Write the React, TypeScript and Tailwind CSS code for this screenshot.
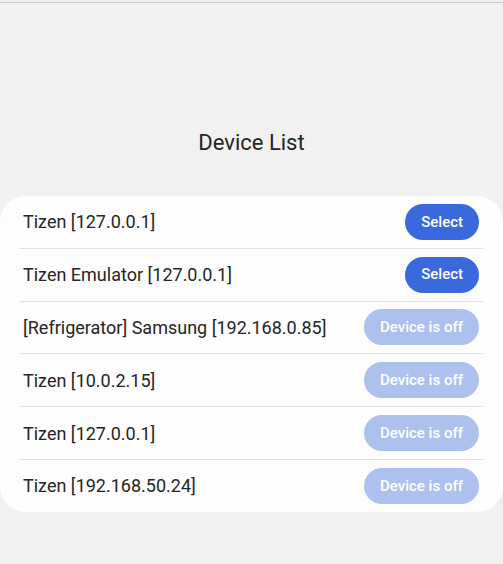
const devices = [
  { name: "Tizen [127.0.0.1]", on: true },
  { name: "Tizen Emulator [127.0.0.1]", on: true },
  { name: "[Refrigerator] Samsung [192.168.0.85]", on: false },
  { name: "Tizen [10.0.2.15]", on: false },
  { name: "Tizen [127.0.0.1]", on: false },
  { name: "Tizen [192.168.50.24]", on: false },
];

export default function App() {
  return (
    <div className="h-[564px] w-full overflow-hidden bg-[#f1f1f1] pt-[2px] font-['Roboto',sans-serif]">
      <div className="border-t border-[#c8c8c8]" />
      <h1 className="mt-[127px] text-center text-[22px] leading-[26px] text-[#252525]">Device List</h1>
      <div className="mt-[40px] rounded-[26px] bg-[#fdfdfd]">
        {devices.map((device, i) => (
          <div key={i} className="ml-[19px] mr-[20px]">
            {i > 0 && <div className="h-px bg-[#e2e2e2]" />}
            <div className="flex h-[51.8px] items-center justify-between pl-[4px] pr-[4px]">
              <span className="text-[18px] text-[#252525]">{device.name}</span>
              <button
                className={`h-[36px] rounded-full px-[16px] text-[15px] font-medium text-white ${
                  device.on ? "bg-[#3a68dd]" : "bg-[#adc1ef]"
                }`}
              >
                {device.on ? "Select" : "Device is off"}
              </button>
            </div>
          </div>
        ))}
      </div>
    </div>
  );
}
